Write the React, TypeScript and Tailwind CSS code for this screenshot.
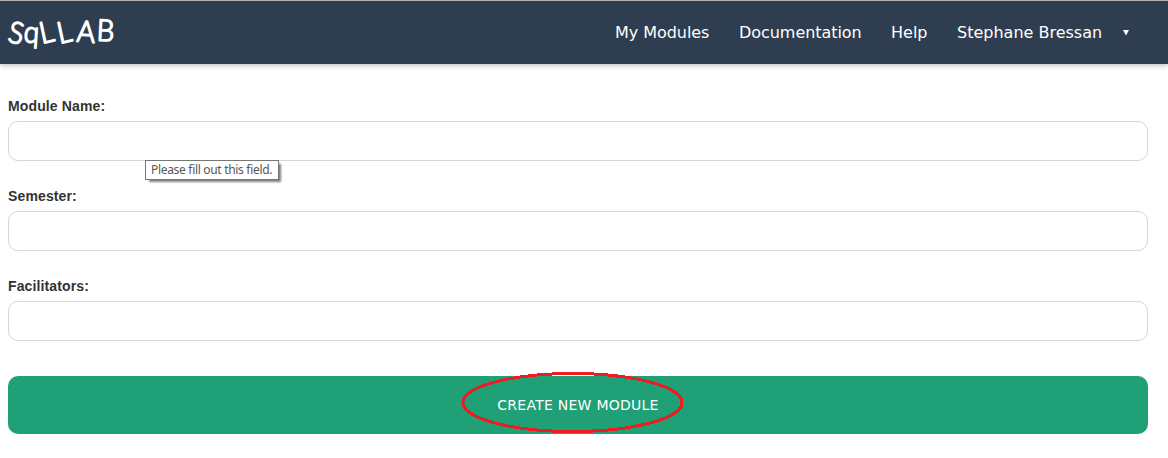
const fields = ["Module Name:", "Semester:", "Facilitators:"];

function Logo() {
  return (
    <svg width="120" height="56" viewBox="0 0 120 56" fill="white" stroke="white" strokeWidth="1.6" strokeLinejoin="round" className="font-['Lato',sans-serif] font-light" aria-label="SqLLAB">
      <text transform="scale(0.93 1)" fontSize="30" x="7.5 25 45 64 82 103.5" y="40.5 41 43 43 40.5 39.5" rotate="12 4 -13 -13 4 3">
        SqLLAB
      </text>
    </svg>
  );
}

export default function App() {
  return (
    <div className="h-[458px] overflow-hidden bg-white font-['DejaVu_Sans',sans-serif]">
      <header className="flex h-16 justify-between border-t border-[#b0b0b0] bg-[#2e3e50] shadow-[0_1px_6px_rgba(0,0,0,0.3)]">
        <Logo />
        <nav className="flex h-[63px] items-center pr-[38px] text-[16px] whitespace-nowrap text-white">
          <a className="w-[124px] tracking-[-0.05px]">My Modules</a>
          <a className="w-[152px] tracking-[-0.05px]">Documentation</a>
          <a className="w-[66px]">Help</a>
          <a className="w-[165px]">Stephane Bressan</a>
          <svg width="8" height="8" viewBox="0 0 8 8" fill="white"><path d="M1 1h6L4 6.5z" /></svg>
        </nav>
      </header>
      <form className="pr-5 pl-2 pt-[33px]">
        {fields.map((label, i) => (
          <div key={label} className="relative h-[90px]">
            <label className="block h-6 pt-px font-['Liberation_Sans',sans-serif] text-[14px] leading-[17px] font-bold tracking-[0.13px] text-[#333]">{label}</label>
            <input className="block h-10 w-full rounded-[10px] border border-[#d5d5d5] bg-white px-3 outline-none" />
            {i === 0 && (
              <div className="absolute top-[63px] left-[137px] h-5 w-[134px] border border-[#767676] bg-white pl-[5px] font-['Noto_Sans',sans-serif] text-[12px] leading-[18px] tracking-[-0.31px] whitespace-nowrap text-[#575757] shadow-[3px_3px_2px_-1px_rgba(0,0,0,0.5)]">
                Please fill out this field.
              </div>
            )}
          </div>
        ))}
        <button type="button" className="relative mt-[9px] flex h-[58px] w-full items-center justify-center rounded-[10px] bg-[#20a077] text-[14px] tracking-[0.25px] text-white">
          CREATE NEW MODULE
          <svg className="absolute -top-1 left-[453px]" width="223" height="62" viewBox="0 0 223 62" fill="none" stroke="#ed1c24" strokeWidth="3" shapeRendering="crispEdges">
            <ellipse cx="111.5" cy="30.5" rx="109.5" ry="29" />
          </svg>
        </button>
      </form>
    </div>
  );
}
